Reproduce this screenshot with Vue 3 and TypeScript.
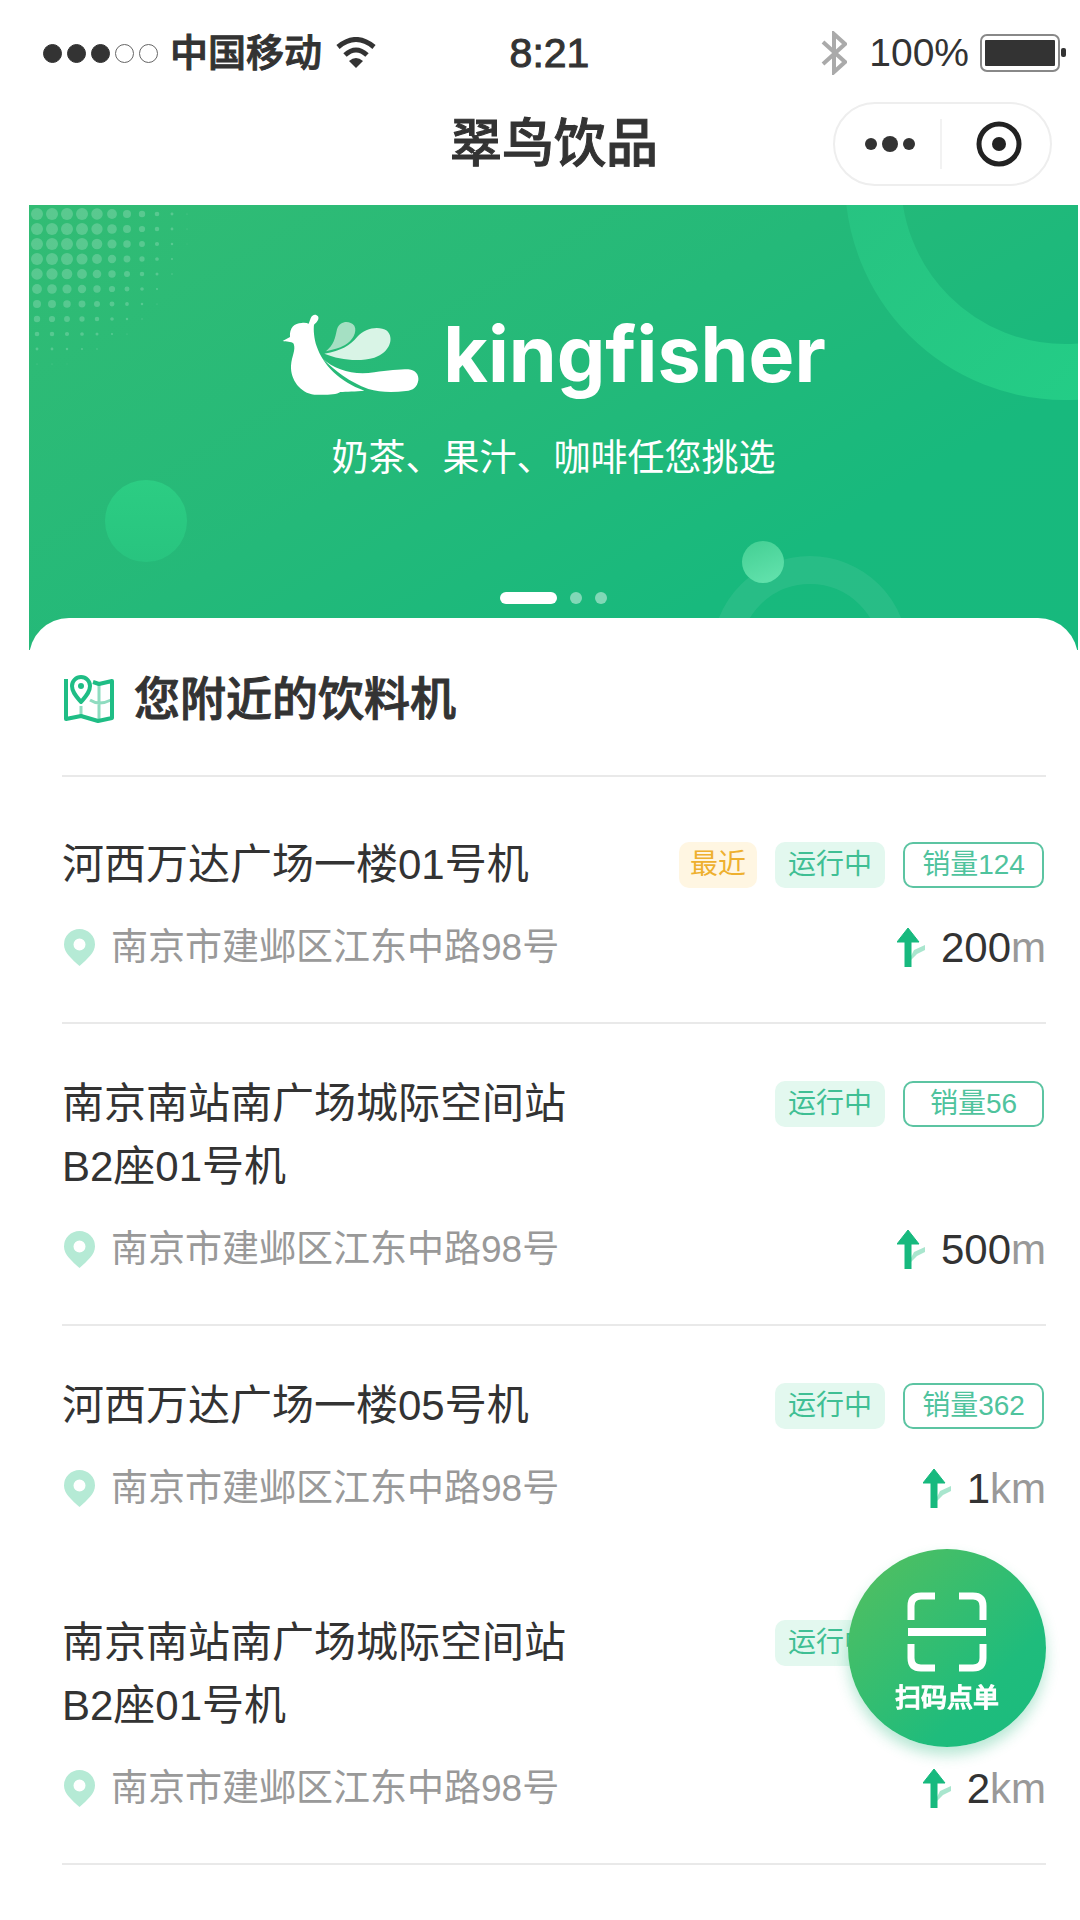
<script setup lang="ts">
interface Machine {
  id: number
  name: string
  address: string
  nearest: boolean
  sales: number
  distance: string
  unit: string
}

interface Dot {
  x: number
  y: number
  r: number
}

const machines: Machine[] = [
  { id: 1, name: '河西万达广场一楼01号机', address: '南京市建邺区江东中路98号', nearest: true, sales: 124, distance: '200', unit: 'm' },
  { id: 2, name: '南京南站南广场城际空间站B2座01号机', address: '南京市建邺区江东中路98号', nearest: false, sales: 56, distance: '500', unit: 'm' },
  { id: 3, name: '河西万达广场一楼05号机', address: '南京市建邺区江东中路98号', nearest: false, sales: 362, distance: '1', unit: 'km' },
  { id: 4, name: '南京南站南广场城际空间站B2座01号机', address: '南京市建邺区江东中路98号', nearest: false, sales: 128, distance: '2', unit: 'km' },
]

// Halftone corner: dots shrink with their distance from the top left
const halftone: Dot[] = []
for (let row = 0; row < 12; row++) {
  for (let col = 0; col < 12; col++) {
    const r = Math.min(6, 9.2 - 0.86 * Math.hypot(row, col))
    if (r > 0.4) halftone.push({ x: 8 + col * 15, y: 9 + row * 15, r })
  }
}
</script>

<template>
  <div class="page">
    <header>
      <div class="status">
        <div class="status-left">
          <span class="signal">
            <i v-for="n in 5" :key="n" :class="{ full: n <= 3 }"></i>
          </span>
          <span class="carrier">中国移动</span>
          <svg class="wifi" viewBox="0 0 40 32" aria-hidden="true">
            <g fill="none" stroke="#333" stroke-width="5">
              <path d="M2 10Q20 -5 38 10" />
              <path d="M9 18Q20 8 31 18" />
            </g>
            <path d="M13 24Q20 18 27 24L20 31Z" fill="#333" />
          </svg>
        </div>
        <span class="time">8:21</span>
        <div class="status-right">
          <svg class="bluetooth" viewBox="0 0 26 44" aria-hidden="true">
            <path d="M2 11L24 31L13 41V3L24 13L2 33" fill="none" stroke="#aaa" stroke-width="4" />
          </svg>
          <span class="percent">100%</span>
          <svg class="battery" viewBox="0 0 86 38" aria-hidden="true">
            <rect x="1" y="1" width="78" height="36" rx="6" fill="#fff" stroke="#888" stroke-width="2" />
            <rect x="5" y="6" width="70" height="26" rx="1" fill="#333" />
            <rect x="81" y="14" width="5" height="9" rx="2" fill="#333" />
          </svg>
        </div>
      </div>

      <div class="nav">
        <h1>翠鸟饮品</h1>
        <div class="capsule">
          <button type="button" aria-label="更多">
            <svg width="50" height="20" viewBox="0 0 50 20">
              <g fill="#333">
                <circle cx="6" cy="10" r="6" />
                <circle cx="25" cy="10" r="8" />
                <circle cx="44" cy="10" r="6" />
              </g>
            </svg>
          </button>
          <button type="button" aria-label="关闭">
            <svg width="48" height="48" viewBox="0 0 48 48">
              <circle cx="24" cy="24" r="20" fill="none" stroke="#222" stroke-width="5" />
              <circle cx="24" cy="24" r="7" fill="#222" />
            </svg>
          </button>
        </div>
      </div>
    </header>

    <section class="banner">
      <svg class="decor" viewBox="0 0 1049 445" preserveAspectRatio="xMaxYMin slice" aria-hidden="true">
        <defs>
          <linearGradient id="ball" x1="0" y1="0" x2="0" y2="1">
            <stop offset="0" stop-color="#2ccd83" />
            <stop offset="1" stop-color="#28c47f" />
          </linearGradient>
          <linearGradient id="pearl" x1="0" y1="0" x2="0.4" y2="1">
            <stop offset="0" stop-color="#43cf93" />
            <stop offset="1" stop-color="#5fe0aa" />
          </linearGradient>
          <linearGradient id="arc" x1="0" y1="0" x2="1" y2="1">
            <stop offset="0" stop-color="#29bf7f" />
            <stop offset="1" stop-color="#22d088" />
          </linearGradient>
        </defs>
        <g fill="#fff" fill-opacity="0.2">
          <circle v-for="(d, i) in halftone" :key="i" :cx="d.x" :cy="d.y" :r="d.r" />
        </g>
        <circle cx="1036" cy="-25" r="192" fill="none" stroke="url(#arc)" stroke-width="56" />
        <circle cx="117" cy="316" r="41" fill="url(#ball)" />
        <circle cx="781" cy="449" r="84" fill="none" stroke="#fff" stroke-opacity="0.07" stroke-width="28" />
        <circle cx="734" cy="357" r="21" fill="url(#pearl)" />
      </svg>
      <div class="brand">
        <svg class="bird" viewBox="50 68 417 249" aria-hidden="true">
          <path fill="#fff" d="M55 152L77 140C75 112 90 99 112 98C121 97 128 98 133 100L139 84C143 72 155 70 161 78C165 86 160 94 149 103C147 118 149 145 157 168C175 222 225 275 300 301C275 304 245 303 228 305C215 314 180 314 150 313C108 308 78 268 80 226C82 196 95 180 88 160C80 152 66 155 55 152Z" />
          <path fill="#fff" d="M174 204C212 240 270 256 330 246C370 240 405 237 432 237C454 239 464 254 462 270C459 290 446 301 425 302C385 307 345 306 312 296C255 275 215 245 174 204Z" />
          <path fill="#d9f4e6" d="M180 190C232 180 256 166 279 139C302 112 345 106 368 121C390 142 378 185 330 202C280 216 222 207 180 190Z" />
          <path fill="#a5e0c3" d="M185 183C208 164 212 145 218 117C226 92 255 89 270 106C280 124 264 152 242 164C224 174 206 178 185 183Z" />
        </svg>
        <span class="brand-name">kingfisher</span>
      </div>
      <p class="slogan">奶茶、果汁、咖啡任您挑选</p>
      <div class="indicators">
        <button type="button" class="active" aria-label="第1张"></button>
        <button type="button" aria-label="第2张"></button>
        <button type="button" aria-label="第3张"></button>
      </div>
    </section>

    <main class="sheet">
      <div class="sheet-head">
        <svg class="map" viewBox="0 0 50 48" aria-hidden="true">
          <g fill="none" stroke="#8fdcc0" stroke-width="3">
            <path d="M35 9V44M26 25Q35 31 47 25M17 31V41" />
          </g>
          <g fill="none" stroke="#1fbd85" stroke-width="4" stroke-linejoin="round">
            <path d="M2 4V44L17 41L34 46L48 43V6L35 9L29 7" />
            <path d="M17 27C12 21 8 17 8 11A9 9 0 0 1 26 11C26 17 22 21 17 27Z" />
          </g>
          <circle cx="17" cy="11" r="3" fill="#1fbd85" />
        </svg>
        <h2>您附近的饮料机</h2>
      </div>

      <ul class="list">
        <li v-for="m in machines" :key="m.id" :class="{ plain: m.id === 3 }">
          <div class="row">
            <h3>{{ m.name }}</h3>
            <div class="tags">
              <span v-if="m.nearest" class="tag near">最近</span>
              <span class="tag running">运行中</span>
              <span class="tag sales">销量{{ m.sales }}</span>
            </div>
          </div>
          <div class="row place">
            <div class="address">
              <svg class="pin" viewBox="0 0 31 37" aria-hidden="true">
                <path fill="#b5ead5" fill-rule="evenodd" d="M15.5 37C8 30 0 24 0 15.500A15.500 15.500 0 0 1 31 15.500C31 24 23 30 15.500 37ZM15.500 9.500A6 6 0 1 0 15.500 21.500A6 6 0 1 0 15.500 9.500Z" />
              </svg>
              <span>{{ m.address }}</span>
            </div>
            <div class="distance">
              <svg class="arrow" viewBox="0 0 29 39" aria-hidden="true">
                <path d="M13 30L17 22L28 17V22L20 26L14 32Z" fill="#a9e6ce" />
                <path d="M11 0L22 14H14V39H8V14H0Z" fill="#17b97e" stroke="#17b97e" stroke-width="1" />
              </svg>
              <span><b>{{ m.distance }}</b>{{ m.unit }}</span>
            </div>
          </div>
        </li>
      </ul>
    </main>

    <button type="button" class="scan">
      <svg viewBox="0 0 80 80" aria-hidden="true">
        <g fill="none" stroke="#fff" stroke-width="7">
          <path d="M4 28V14Q4 4 14 4H28M52 4H66Q76 4 76 14V28M4 52V66Q4 76 14 76H28M52 76H66Q76 76 76 66V52" />
        </g>
        <rect x="1" y="36" width="78" height="8" fill="#fff" />
      </svg>
      <span>扫码点单</span>
    </button>
  </div>
</template>

<style>
body {
  background: #fff;
}
</style>

<style scoped>
.page {
  font-family: "Liberation Sans", "Noto Sans CJK SC", sans-serif;
  color: #333;
  background: #fff;
}

h1,
h2,
h3,
p,
ul {
  margin: 0;
  padding: 0;
}

button {
  border: 0;
  padding: 0;
  background: none;
  font-family: inherit;
  cursor: pointer;
}

svg {
  display: block;
  flex: none;
}

.status {
  display: grid;
  grid-template-columns: 1fr auto 1fr;
  align-items: center;
  box-sizing: border-box;
  height: 96px;
  padding: 10px 14px 0 33px;
}

.status-left {
  display: flex;
  align-items: center;
  padding-left: 10px;
}

.signal {
  display: flex;
  gap: 5px;
  margin-right: 12px;
}

.signal i {
  box-sizing: border-box;
  width: 19px;
  height: 19px;
  border: 1px solid #666;
  border-radius: 50%;
}

.signal i.full {
  background: #333;
  border-color: #333;
}

.carrier {
  font-size: 38px;
  line-height: 48px;
  font-weight: 500;
  -webkit-text-stroke: 1px #333;
}

.wifi {
  width: 40px;
  height: 32px;
  margin-left: 14px;
}

.time {
  font-size: 41px;
  line-height: 48px;
  -webkit-text-stroke: 1px #333;
}

.status-right {
  display: flex;
  align-items: center;
  justify-content: flex-end;
}

.bluetooth {
  width: 26px;
  height: 44px;
  margin-right: 22px;
}

.percent {
  font-size: 39px;
  line-height: 48px;
  margin-right: 11px;
}

.battery {
  width: 86px;
  height: 38px;
}

.nav {
  display: grid;
  grid-template-columns: 1fr auto 1fr;
  align-items: center;
  box-sizing: border-box;
  height: 109px;
  padding: 0 28px 14px 56px;
}

h1 {
  grid-column: 2;
  font-size: 52px;
  line-height: 64px;
  font-weight: 500;
  -webkit-text-stroke: 1px #333;
}

.capsule {
  justify-self: end;
  display: flex;
  align-items: center;
  box-sizing: border-box;
  width: 219px;
  height: 84px;
  border: 2px solid #eee;
  border-radius: 42px;
}

.capsule button {
  box-sizing: border-box;
  width: 105px;
  height: 50px;
  padding-left: 5px;
  display: flex;
  align-items: center;
  justify-content: center;
}

.capsule button + button {
  flex: 1;
  border-left: 2px solid #f2f2f2;
}

.banner {
  position: relative;
  display: flex;
  flex-direction: column;
  align-items: center;
  margin: 0 2px 0 29px;
  padding: 108px 0 46px;
  overflow: hidden;
  background: linear-gradient(150deg, #32bc74 0%, #24b979 45%, #18b97d 75%, #17b97d 100%);
}

.decor {
  position: absolute;
  inset: 0;
  width: 100%;
  height: 100%;
}

.brand {
  position: relative;
  display: flex;
  align-items: center;
  gap: 23px;
}

.bird {
  width: 139px;
  height: 83px;
}

.brand-name {
  font-family: Inter, "Noto Sans", sans-serif;
  font-size: 77px;
  line-height: 83px;
  font-weight: 700;
  color: #fff;
}

.slogan {
  position: relative;
  margin-top: 38px;
  font-size: 37px;
  line-height: 50px;
  color: #fff;
}

.indicators {
  position: relative;
  display: flex;
  gap: 13px;
  margin-top: 108px;
}

.indicators button {
  width: 12px;
  height: 12px;
  border-radius: 6px;
  background: rgba(255, 255, 255, 0.45);
}

.indicators .active {
  width: 57px;
  background: #fff;
}

.sheet {
  position: relative;
  margin: -32px 2px 0 29px;
  padding: 50px 32px 54px 33px;
  border-radius: 40px 40px 0 0;
  background: #fff;
}

.sheet-head {
  display: flex;
  align-items: center;
  gap: 20px;
  padding-bottom: 45px;
  border-bottom: 2px solid #e9e9e9;
}

.map {
  width: 50px;
  height: 48px;
  margin-left: 2px;
}

h2 {
  font-size: 46px;
  line-height: 62px;
  font-weight: 500;
  -webkit-text-stroke: 1px #333;
}

.list {
  padding-top: 8px;
  list-style: none;
}

.list li {
  padding: 48px 0 49px;
  border-bottom: 2px solid #e9e9e9;
}

.list li.plain {
  border: 0;
}

.row {
  display: flex;
  align-items: flex-start;
  justify-content: space-between;
}

h3 {
  max-width: 54%;
  font-size: 42px;
  line-height: 63px;
  font-weight: 400;
}

.tags {
  display: flex;
  align-items: center;
  gap: 18px;
  height: 63px;
  padding-right: 2px;
}

.tag {
  box-sizing: border-box;
  height: 46px;
  padding: 0 13px;
  border-radius: 10px;
  font-size: 28px;
  line-height: 46px;
  text-align: center;
  white-space: nowrap;
}

.near {
  padding: 0 11px;
  color: #eeb02f;
  background: #fff6e2;
}

.running {
  color: #3fbf94;
  background: #e3f8ef;
}

.sales {
  min-width: 141px;
  border: 2px solid #5cc4a2;
  line-height: 42px;
  color: #4fc39d;
}

.place {
  align-items: center;
  margin-top: 26px;
  height: 51px;
  color: #999;
}

.address {
  display: flex;
  align-items: center;
  gap: 16px;
  padding-left: 2px;
  font-size: 37px;
  line-height: 51px;
}

.pin {
  width: 31px;
  height: 37px;
}

.distance {
  display: flex;
  align-items: center;
  gap: 15px;
  font-size: 42px;
  line-height: 51px;
}

.distance b {
  font-weight: 400;
  color: #333;
}

.arrow {
  width: 29px;
  height: 39px;
}

.scan {
  position: fixed;
  right: 34px;
  bottom: 173px;
  display: flex;
  flex-direction: column;
  align-items: center;
  box-sizing: border-box;
  width: 198px;
  height: 198px;
  padding-top: 43px;
  border-radius: 50%;
  color: #fff;
  background: linear-gradient(135deg, #52bf60 5%, #1fbc7c 70%, #1abc7e 100%);
  box-shadow: 0 8px 14px rgba(30, 180, 120, 0.32);
}

.scan svg {
  width: 80px;
  height: 80px;
}

.scan span {
  margin-top: 8px;
  font-size: 26px;
  line-height: 36px;
  font-weight: 500;
  -webkit-text-stroke: 1px #fff;
}
</style>
